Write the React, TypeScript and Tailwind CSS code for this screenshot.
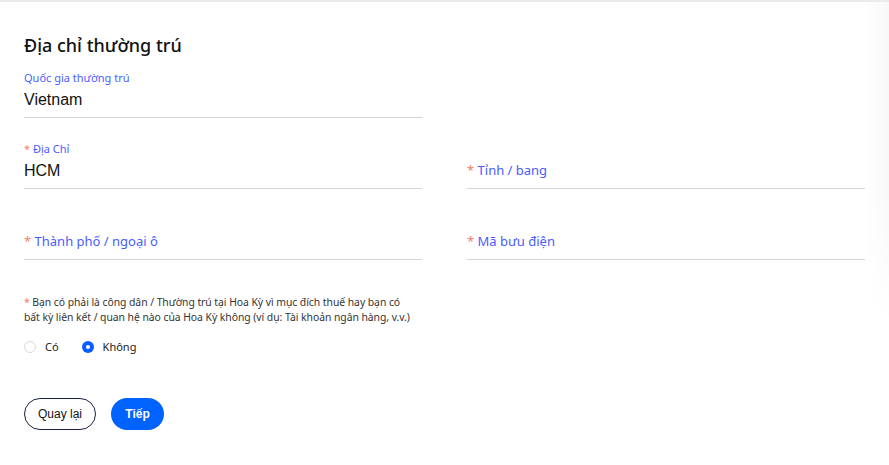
import { useState } from "react";

const labelFont = { fontFamily: '"Noto Sans", "Open Sans", sans-serif' };

function Field({
  label,
  value,
  required,
}: {
  label: string;
  value?: string;
  required?: boolean;
}) {
  const star = required ? <span className="text-[#f5806b]">* </span> : null;
  return (
    <div className="flex flex-col border-b border-[#d3d3d3] pb-[7px]">
      <div
        className="h-[14px] text-[11px] leading-[14px] text-[#4a5cff]"
        style={labelFont}
      >
        {value ? (
          <>
            {star}
            {label}
          </>
        ) : null}
      </div>
      {value ? (
        <div className="mt-[5px] h-[20px] font-['Liberation_Sans',sans-serif] text-[16px] leading-[20px] text-[#111]">
          {value}
        </div>
      ) : (
        <div
          className="mt-[4px] h-[21px] text-[13px] leading-[20px] text-[#4a5cff]"
          style={labelFont}
        >
          {star}
          {label}
        </div>
      )}
    </div>
  );
}

function Radio({
  checked,
  label,
  onClick,
}: {
  checked: boolean;
  label: string;
  onClick: () => void;
}) {
  return (
    <button onClick={onClick} className="flex items-center gap-[9px]">
      {checked ? (
        <span className="flex h-[12px] w-[12px] items-center justify-center rounded-full bg-[#0a5cff]">
          <span className="h-[4px] w-[4px] rounded-full bg-white" />
        </span>
      ) : (
        <span className="h-[12px] w-[12px] rounded-full border border-[#d9d9e0] bg-white" />
      )}
      <span className="text-[11px] leading-[14px] text-[#222]" style={labelFont}>
        {label}
      </span>
    </button>
  );
}

export default function App() {
  const [usPerson, setUsPerson] = useState(false);

  return (
    <div className="relative h-[465px] w-full overflow-hidden border-t-2 border-[#ebebeb] bg-white">
      <div className="px-[24px] pt-[31px]">
        <h2
          className="text-[18px] leading-[24px] font-medium text-[#111]"
          style={labelFont}
        >
          Địa chỉ thường trú
        </h2>

        <div className="mt-[14px] grid w-[841px] grid-cols-2 gap-x-[45px] gap-y-[24px]">
          <Field label="Quốc gia thường trú" value="Vietnam" />
          <div />
          <Field label="Địa Chỉ" value="HCM" required />
          <Field label="Tỉnh / bang" required />
          <Field label="Thành phố / ngoại ô" required />
          <Field label="Mã bưu điện" required />
        </div>

        <p
          className="mt-[35px] text-[10.4px] leading-[15px] tracking-[-0.05px] whitespace-nowrap text-[#333]"
          style={labelFont}
        >
          <span className="text-[#f5806b]">* </span>
          Bạn có phải là công dân / Thường trú tại Hoa Kỳ vì mục đích thuế hay
          bạn có
          <br />
          bất kỳ liên kết / quan hệ nào của Hoa Kỳ không (ví dụ: Tài khoản ngân
          hàng, v.v.)
        </p>

        <div className="mt-[15px] flex items-center gap-[23px]">
          <Radio checked={usPerson} label="Có" onClick={() => setUsPerson(true)} />
          <Radio
            checked={!usPerson}
            label="Không"
            onClick={() => setUsPerson(false)}
          />
        </div>

        <div className="mt-[44px] flex items-center gap-[15px]">
          <button className="h-[32px] w-[72px] rounded-full border border-[#1b2140] font-['Liberation_Sans',sans-serif] text-[12px] font-medium text-[#111]">
            Quay lại
          </button>
          <button className="h-[32px] w-[53px] rounded-full bg-[#0062ff] font-['Liberation_Sans',sans-serif] text-[12px] font-bold text-white">
            Tiếp
          </button>
        </div>
      </div>

      <div className="pointer-events-none absolute top-0 right-0 h-full w-[22px] bg-gradient-to-r from-transparent to-black/[0.03] [mask-image:linear-gradient(to_bottom,black_40%,transparent_70%)]" />
    </div>
  );
}
